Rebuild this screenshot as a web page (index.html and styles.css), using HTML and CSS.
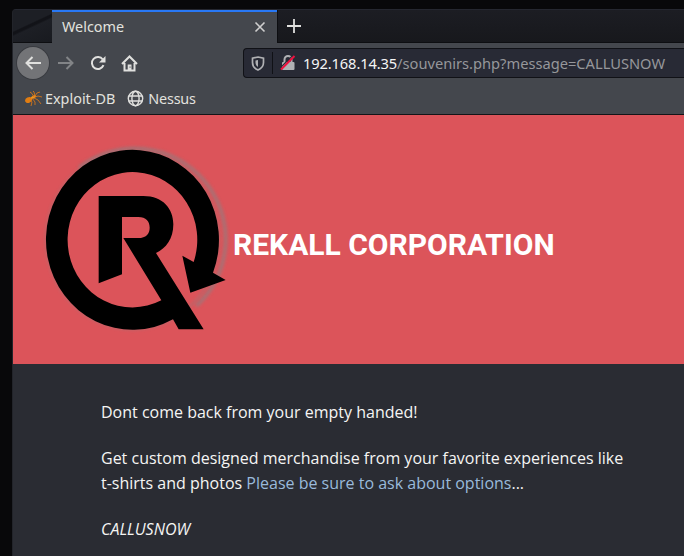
FILE: index.html
```html
<!DOCTYPE html>
<html lang="en">
<head>
<meta charset="utf-8">
<title>Welcome</title>
<link rel="stylesheet" href="styles.css">
</head>
<body>
<div class="window">
  <div class="tabs">
    <div class="tab-gap"></div>
    <div class="tab">
      <span class="tab-title">Welcome</span>
      <svg class="close" width="12" height="12" viewBox="0 0 12 12"><path d="M1.5 1.5l9 9m0-9l-9 9" stroke="#cfcfcf" stroke-width="1.6"/></svg>
    </div>
    <div class="new-tab">
      <svg width="16" height="16" viewBox="0 0 16 16"><path d="M8 1v14M1 8h14" stroke="#e0e0de" stroke-width="1.8"/></svg>
    </div>
  </div>
  <nav class="toolbar">
    <span class="back"><svg width="16" height="16" viewBox="0 0 16 16"><path d="M16 8H1.5M7.5 2l-6 6 6 6" class="line"/></svg></span>
    <svg class="forward" width="16" height="16" viewBox="0 0 16 16"><path d="M0 8H15M8.500 2l6 6-6 6" class="line"/></svg>
    <svg class="reload" width="16" height="16" viewBox="0 0 16 16"><path d="M13.500 10.200A6 6 0 1 1 12.800 4.500" class="line"/><path d="M15.500 1v6.500H9z" fill="#e0e0de"/></svg>
    <svg class="home" width="17" height="17" viewBox="0 0 17 17"><path d="M1 9l7.500-7.500L16 9M3.500 8v7.500h10V8" class="line"/><path d="M6.700 15V9.500h3.800V15z" fill="#e0e0de"/><path d="M8.600 11.500h.9v1.200h-.9z" fill="#44474d"/></svg>
    <div class="address">
      <svg class="shield" width="14" height="15" viewBox="0 0 14 15"><path d="M7 1l5.500 1.200V6.500C12.500 10 10.500 12.500 7 14 3.500 12.500 1.500 10 1.500 6.500V2.200z" fill="none" stroke="#b0b1b4" stroke-width="1.700"/><path d="M7 4v7C5.200 9.700 4.500 8.500 4.500 6.500v-2z" fill="#b0b1b4"/></svg>
      <span class="divider"></span>
      <svg class="lock" width="16" height="16" viewBox="0 0 16 16"><path d="M4.500 8V4.500a3.500 3.500 0 0 1 7 0V8" fill="none" stroke="#b0b1b4" stroke-width="2"/><rect x="2" y="7" width="12.500" height="8" rx="1" fill="#b0b1b4"/><path d="M.3 12.800L13 .2" stroke="#282a35" stroke-width="1.200"/><path d="M1 14.500L14.500 1" stroke="#f0103f" stroke-width="2"/></svg>
      <span class="url"><b>192.168.14.35</b>/souvenirs.php?message=CALLUSNOW</span>
    </div>
  </nav>
  <div class="bookmarks">
    <svg width="17" height="17" viewBox="0 0 17 17"><ellipse cx="3.600" cy="10" rx="3.600" ry="2.700" transform="rotate(-28 3.600 10)" fill="#e17d12"/><ellipse cx="8.500" cy="7" rx="2.800" ry="1.500" transform="rotate(-25 8.500 7)" fill="#ef941f"/><path d="M9 7L7 3.500 5 2M10 6L9 2 8 1M10 6l2-3 3-1M10 7l3-1 4 1M9 8l4 2 3 4M7 8l3 4v3M5 9l2 3-1 4" fill="none" stroke="#d5761a" stroke-width=".9"/></svg>
    <span class="exploit">Exploit-DB</span>
    <svg class="globe" width="17" height="17" viewBox="0 0 17 17"><g fill="none" stroke="#e0e0de" stroke-width="1.400"><circle cx="8.500" cy="8.500" r="7.200"/><ellipse cx="8.500" cy="8.500" rx="3.600" ry="7.200"/><path d="M2 6h13M2 11h13"/></g></svg>
    <span class="nessus">Nessus</span>
  </div>
  <header class="hero">
    <svg class="logo" width="210" height="210" viewBox="0 0 630 630">
      <defs><filter id="soft"><feGaussianBlur stdDeviation="5"/></filter></defs>
      <path d="M148 98A272 272 0 0 1 499 513" fill="none" stroke="#a37377" stroke-width="12" opacity=".85" filter="url(#soft)"/>
      <ellipse cx="307" cy="314" rx="259" ry="269" fill="none" stroke="#a37377" stroke-width="5" opacity=".7" filter="url(#soft)"/>
      <path d="M206 183H340C400 183 430 222 430 268C430 312 408 340 378 354L521 583H446L429 553A259.500 270 0 1 1 549 413L587 435 481 473 457 362 491 381A194.500 203 0 1 0 394 496L280 309H325C348 309 359 297 359 278S348 246 325 246H276V418L206 445Z"/>
    </svg>
    <h1>REKALL CORPORATION</h1>
  </header>
  <main class="content">
    <p>Dont come back from your empty handed!</p>
    <p>Get custom designed merchandise from your favorite experiences like<br>t-shirts and photos <a>Please be sure to ask about options</a>...</p>
    <p><i>CALLUSNOW</i></p>
  </main>
</div>
</body>
</html>
```
FILE: styles.css
```css
* { box-sizing: border-box; }
body { margin: 0; height: 556px; padding: 9px 0 0 12px; background: #08080a; overflow: hidden; }
.window { height: 547px; display: flex; flex-direction: column; background: #2a2c33; border-top: 1px solid #252730; border-left: 1px solid #22242a; border-top-left-radius: 4px; overflow: hidden; font: 11pt/20px "Noto Sans", sans-serif; color: #e2e2df; }
.tabs { height: 33px; display: flex; background: linear-gradient(#1c1d23, #17181c); flex: none; }
.tab-gap { width: 39px; background: linear-gradient(155deg, #1d1f25 0 42%, #121318 45% 49%, #1d1f25 53%, #181a1f); border-bottom: 1px solid #0d0e11; }
.tab { width: 225px; border-top: 2px solid #2878f5; background: #44474d; display: flex; align-items: center; padding: 0 11px 0 10px; }
.tab-title { flex: 1; font-size: 14.4px; padding-bottom: 2px; }
.close { margin-bottom: 1px; }
.new-tab { flex: 1; border-left: 1px solid #0d0e11; border-bottom: 1px solid #0d0e11; padding: 8px 0 0 8px; }
.toolbar { height: 40px; flex: none; display: flex; align-items: center; background: #44474d; padding-left: 4px; }
.toolbar svg { flex: none; }
.line { fill: none; stroke: #e0e0de; stroke-width: 2; }
.back { width: 32px; height: 32px; border-radius: 50%; background: #737477; box-shadow: 0 0 0 1px #393b40; display: flex; align-items: center; justify-content: center; }
.forward { margin-left: 9px; opacity: .4; }
.reload { margin-left: 16px; }
.home { margin-left: 15px; }
.address { height: 30px; flex: 1; margin-left: 105px; border: 1px solid #101116; border-right: 0; border-radius: 4px 0 0 4px; background: #282a35; display: flex; align-items: center; padding-left: 7px; }
.divider { width: 1px; height: 22px; background: #101116; margin: 0 7px; }
.url { margin-left: 7px; color: #96979b; white-space: nowrap; }
.url b { font-weight: 400; color: #f5f5f5; letter-spacing: -.12px; }
.bookmarks { height: 32px; flex: none; display: flex; align-items: center; background: #44474d; border-bottom: 1px solid #141518; padding-left: 12px; font-size: 14.4px; }
.exploit { margin-left: 3px; }
.globe { margin-left: 12px; }
.nessus { margin-left: 4px; letter-spacing: -.2px; }
.hero { height: 249px; flex: none; display: flex; align-items: flex-start; background: #dc545a; padding: 20px 0 0 17px; }
.logo { flex: none; }
h1 { margin: 92px 0 0 -7px; font: bold 30px/35px Roboto, sans-serif; color: #fff; white-space: nowrap; }
.content { padding: 36px 0 0 88px; font: 16px/25px "Open Sans", sans-serif; color: #f5f5f3; white-space: nowrap; }
p { margin: 0 0 21px; }
a { color: #99badb; }
```
